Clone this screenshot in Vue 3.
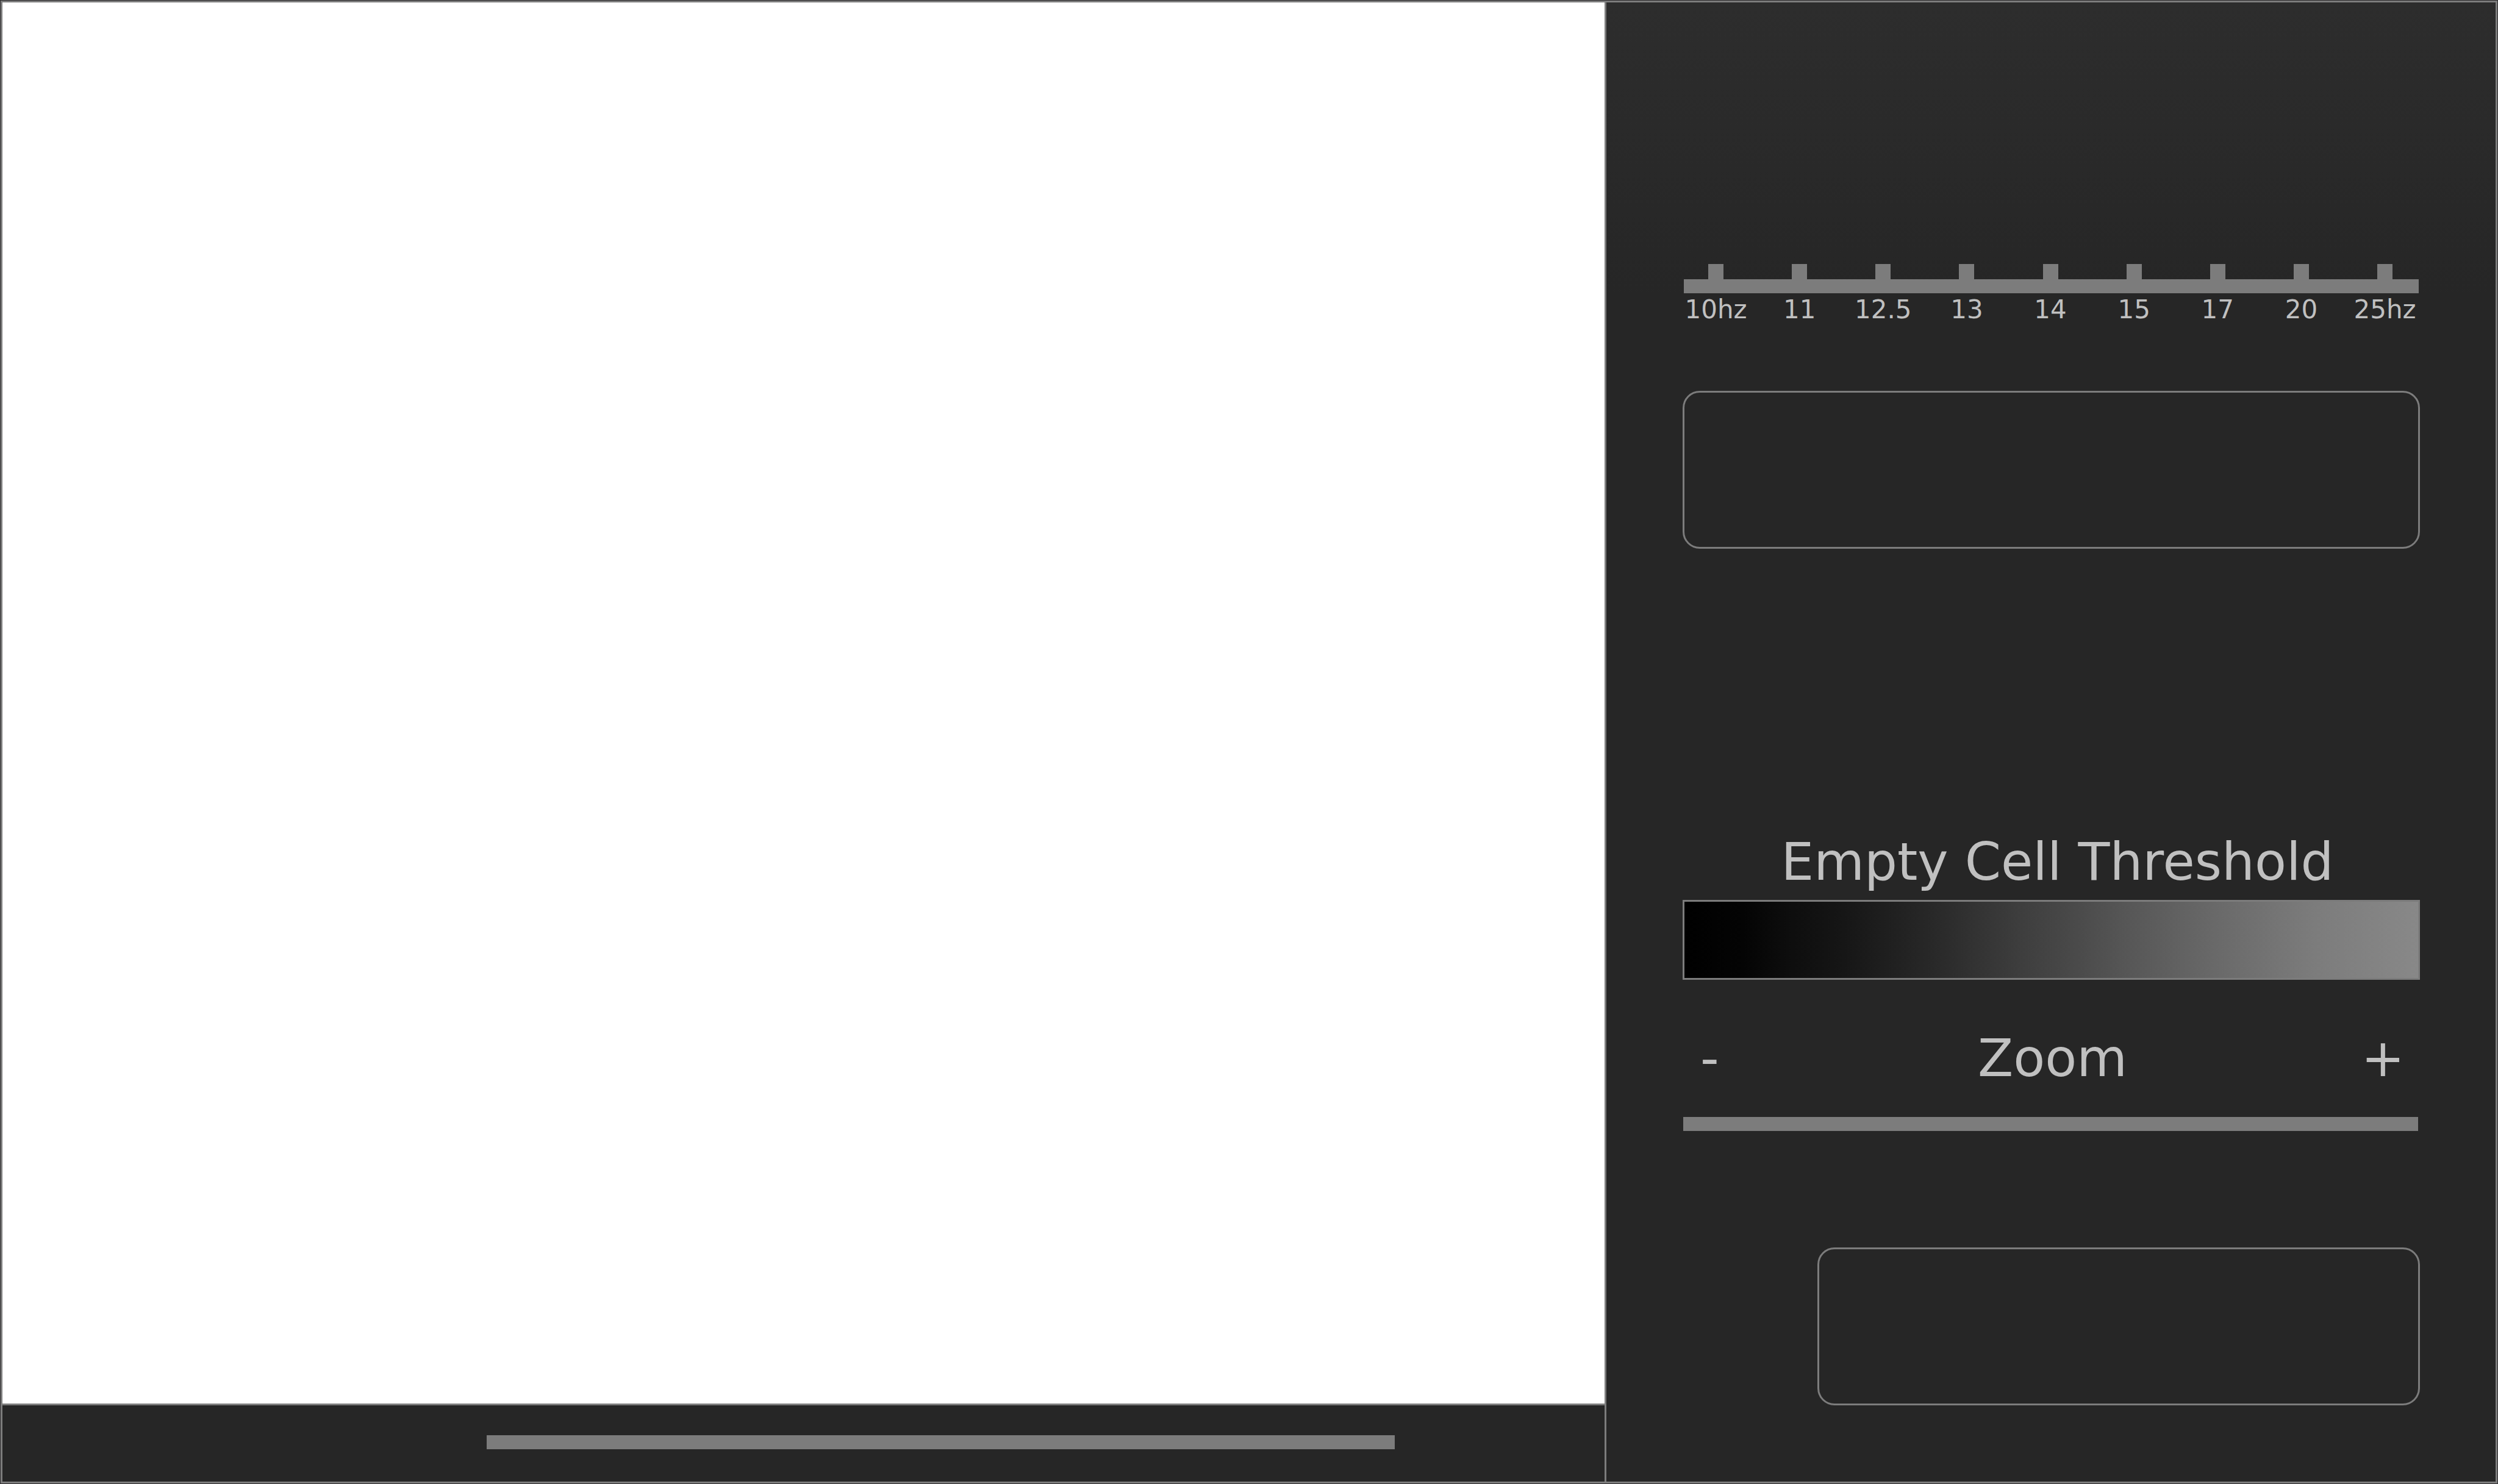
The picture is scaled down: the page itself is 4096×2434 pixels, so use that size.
<script setup>
import { ref } from 'vue'

const rates = ['10hz', '11', '12.5', '13', '14', '15', '17', '20', '25hz']
const rate = ref(0)
const threshold = ref(0)
const zoom = ref(50)
const position = ref(0)

function stepZoom(amount) {
  zoom.value = Math.min(100, Math.max(0, Number(zoom.value) + amount))
}
</script>

<template>
  <div class="frame">
    <main class="stage">
      <div class="canvas"></div>
      <footer class="timeline">
        <input v-model="position" class="track" type="range" aria-label="Position" />
      </footer>
    </main>

    <aside class="panel">
      <section class="rate">
        <div class="marks">
          <span v-for="r in rates" :key="r" class="mark"></span>
        </div>
        <input
          v-model="rate"
          class="track"
          type="range"
          min="0"
          :max="rates.length - 1"
          aria-label="Rate"
        />
        <div class="labels">
          <span v-for="r in rates" :key="r" class="label">{{ r }}</span>
        </div>
      </section>

      <button class="box" type="button" aria-label="Start"></button>

      <section class="threshold">
        <label class="title" for="threshold">Empty Cell Threshold</label>
        <input id="threshold" v-model="threshold" class="ramp" type="range" />
      </section>

      <section class="zoom">
        <div class="zoom-row">
          <button class="step" type="button" @click="stepZoom(-10)">-</button>
          <label for="zoom">Zoom</label>
          <button class="step" type="button" @click="stepZoom(10)">+</button>
        </div>
        <input id="zoom" v-model="zoom" class="track" type="range" />
      </section>

      <button class="box box-short" type="button" aria-label="Save"></button>
    </aside>
  </div>
</template>

<style>
body {
  margin: 0;
  background: #2b292b;
}
</style>

<style scoped>
.frame {
  --line: #7c7c7c;
  --ink: #c0c0c0;
  --dark: #262626;
  box-sizing: border-box;
  display: grid;
  grid-template-columns: minmax(0, 1fr) 1461px;
  min-height: calc(100vh - 2px);
  margin: 1px;
  border: 3px solid var(--line);
  background: var(--dark);
  color: var(--ink);
  font-family: "DejaVu Sans", Verdana, sans-serif;
}

.stage {
  display: flex;
  flex-direction: column;
}

.canvas {
  flex: 1;
  background: #fff;
}

.timeline {
  display: flex;
  padding: 49px 344px 53px 794px;
  border-top: 3px solid var(--line);
}

.panel {
  display: flex;
  flex-direction: column;
  padding: 429px 124px 125px 125px;
  border-left: 3px solid var(--line);
  background: linear-gradient(#2d2d2d, #262626 480px);
}

.track,
.ramp {
  appearance: none;
  display: block;
  box-sizing: border-box;
  width: 100%;
  margin: 0;
  border-radius: 0;
  cursor: pointer;
}

.track {
  height: 23px;
  background: var(--line);
}

.track::-webkit-slider-thumb,
.ramp::-webkit-slider-thumb {
  appearance: none;
  width: 23px;
  height: 23px;
  background: transparent;
}

.rate {
  padding: 0 2px;
}

.marks,
.labels {
  display: flex;
  justify-content: space-between;
  padding: 0 43px 0 40px;
}

.mark {
  width: 25px;
  height: 25px;
  background: var(--line);
}

.labels {
  margin-top: 2px;
  font-size: 42px;
  line-height: 50px;
}

.label {
  display: flex;
  justify-content: center;
  width: 25px;
  white-space: nowrap;
}

.box {
  box-sizing: border-box;
  height: 259px;
  margin: 108px 0 0;
  padding: 0;
  border: 3px solid var(--line);
  border-radius: 28px;
  background: transparent;
}

.box-short {
  align-self: flex-end;
  width: 988px;
  margin-top: 191px;
}

.threshold {
  margin-top: 464px;
}

.title {
  display: block;
  padding-left: 20px;
  font-size: 85px;
  line-height: 100px;
  text-align: center;
}

.ramp {
  height: 131px;
  margin-top: 12px;
  border: 3px solid var(--line);
  background: linear-gradient(
    90deg,
    #000 0%,
    #040404 8%,
    #0d0d0d 14%,
    #151515 21%,
    #272727 33%,
    #3e3e3e 46%,
    #4b4b4b 54%,
    #565656 60%,
    #6a6a6a 73%,
    #7c7c7c 86%,
    #888 100%
  );
}

.zoom {
  margin-top: 79px;
  padding: 0 3px 0 1px;
}

.zoom-row {
  display: grid;
  grid-template-columns: 1fr auto 1fr;
  padding: 0 22px 0 28px;
  font-size: 85px;
  line-height: 100px;
}

.step {
  justify-self: start;
  padding: 0;
  border: 0;
  background: none;
  color: inherit;
  font: inherit;
  cursor: pointer;
}

.step:last-child {
  justify-self: end;
}

.zoom .track {
  margin-top: 46px;
}
</style>
